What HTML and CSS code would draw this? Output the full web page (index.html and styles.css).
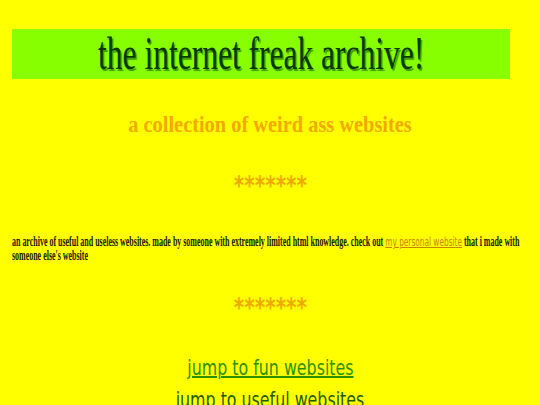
FILE: index.html
```html
<!DOCTYPE html>
<html>
<head>
<meta charset="utf-8">
<title>the internet freak archive!</title>
<link rel="stylesheet" href="styles.css">
</head>
<body>
<header class="banner">
  <h1 class="title"><span class="squeeze title-text">the internet freak archive!</span></h1>
</header>
<h2 class="subtitle"><span class="squeeze sub-text">a collection of weird ass websites</span></h2>
<p class="stars"><span class="squeeze star-text">*******</span></p>
<div class="intro-wrap">
  <p class="intro">an archive of useful and useless websites. made by someone with extremely limited html knowledge. check out <a class="personal" href="#">my personal website</a> that i made with someone else's website</p>
</div>
<p class="stars stars-second"><span class="squeeze star-text">*******</span></p>
<nav class="jumps">
  <a class="jump jump-fun" href="#fun"><span class="squeeze jump-text">jump to fun websites</span></a>
  <a class="jump jump-useful" href="#useful"><span class="squeeze jump-text">jump to useful websites</span></a>
</nav>
</body>
</html>
```
FILE: styles.css
```css
html, body {
  margin: 0;
  padding: 0;
  background: #ffff00;
  overflow: hidden;
}
body {
  width: 540px;
  height: 405px;
  font-family: "Liberation Serif", "Times New Roman", serif;
}
.squeeze {
  display: inline-block;
  transform-origin: center top;
  white-space: nowrap;
}
.banner {
  margin: 29px 30px 0 12px;
  height: 50px;
  background: #88ff00;
  text-align: center;
}
.title {
  margin: 0;
  font-weight: normal;
  font-size: 46px;
  line-height: 50px;
  color: #083800;
  text-shadow: 2px 2px 1px #3d9a00;
}
.title-text {
  transform: scaleX(0.685);
}
.subtitle {
  margin: 32px 0 0;
  text-align: center;
  font-size: 23px;
  line-height: 28px;
  font-weight: bold;
  color: #f2a900;
}
.sub-text {
  transform: scaleX(0.886);
}
.stars {
  margin: 37px 0 0;
  text-align: center;
  font-family: "DejaVu Sans", sans-serif;
  font-weight: bold;
  font-size: 27px;
  line-height: 20px;
  color: #eeaa00;
}
.star-text {
  transform: scaleX(0.74);
}
.intro-wrap {
  margin: 39px 0 0 12px;
  width: 516px;
}
.intro {
  margin: 0;
  width: 912px;
  transform: scaleX(0.568);
  transform-origin: left top;
  font-size: 14px;
  line-height: 14px;
  font-weight: bold;
  color: #1a1a00;
}
.personal {
  color: #c98500;
  font-family: "DejaVu Sans", sans-serif;
  font-size: 13px;
  font-weight: normal;
  text-decoration: underline;
}
.stars-second {
  margin-top: 35px;
}
.jumps {
  margin-top: 34px;
  display: flex;
  flex-direction: column;
  align-items: center;
}
.jump {
  font-family: "DejaVu Sans", sans-serif;
  font-size: 22px;
  line-height: 32px;
  text-decoration: none;
}
.jump-text {
  transform: scaleX(0.72);
}
.jump-fun {
  color: #2d8f00;
}
.jump-fun .jump-text {
  text-decoration: underline;
  text-decoration-thickness: 2px;
}
.jump-useful {
  color: #1e5a00;
}
```
